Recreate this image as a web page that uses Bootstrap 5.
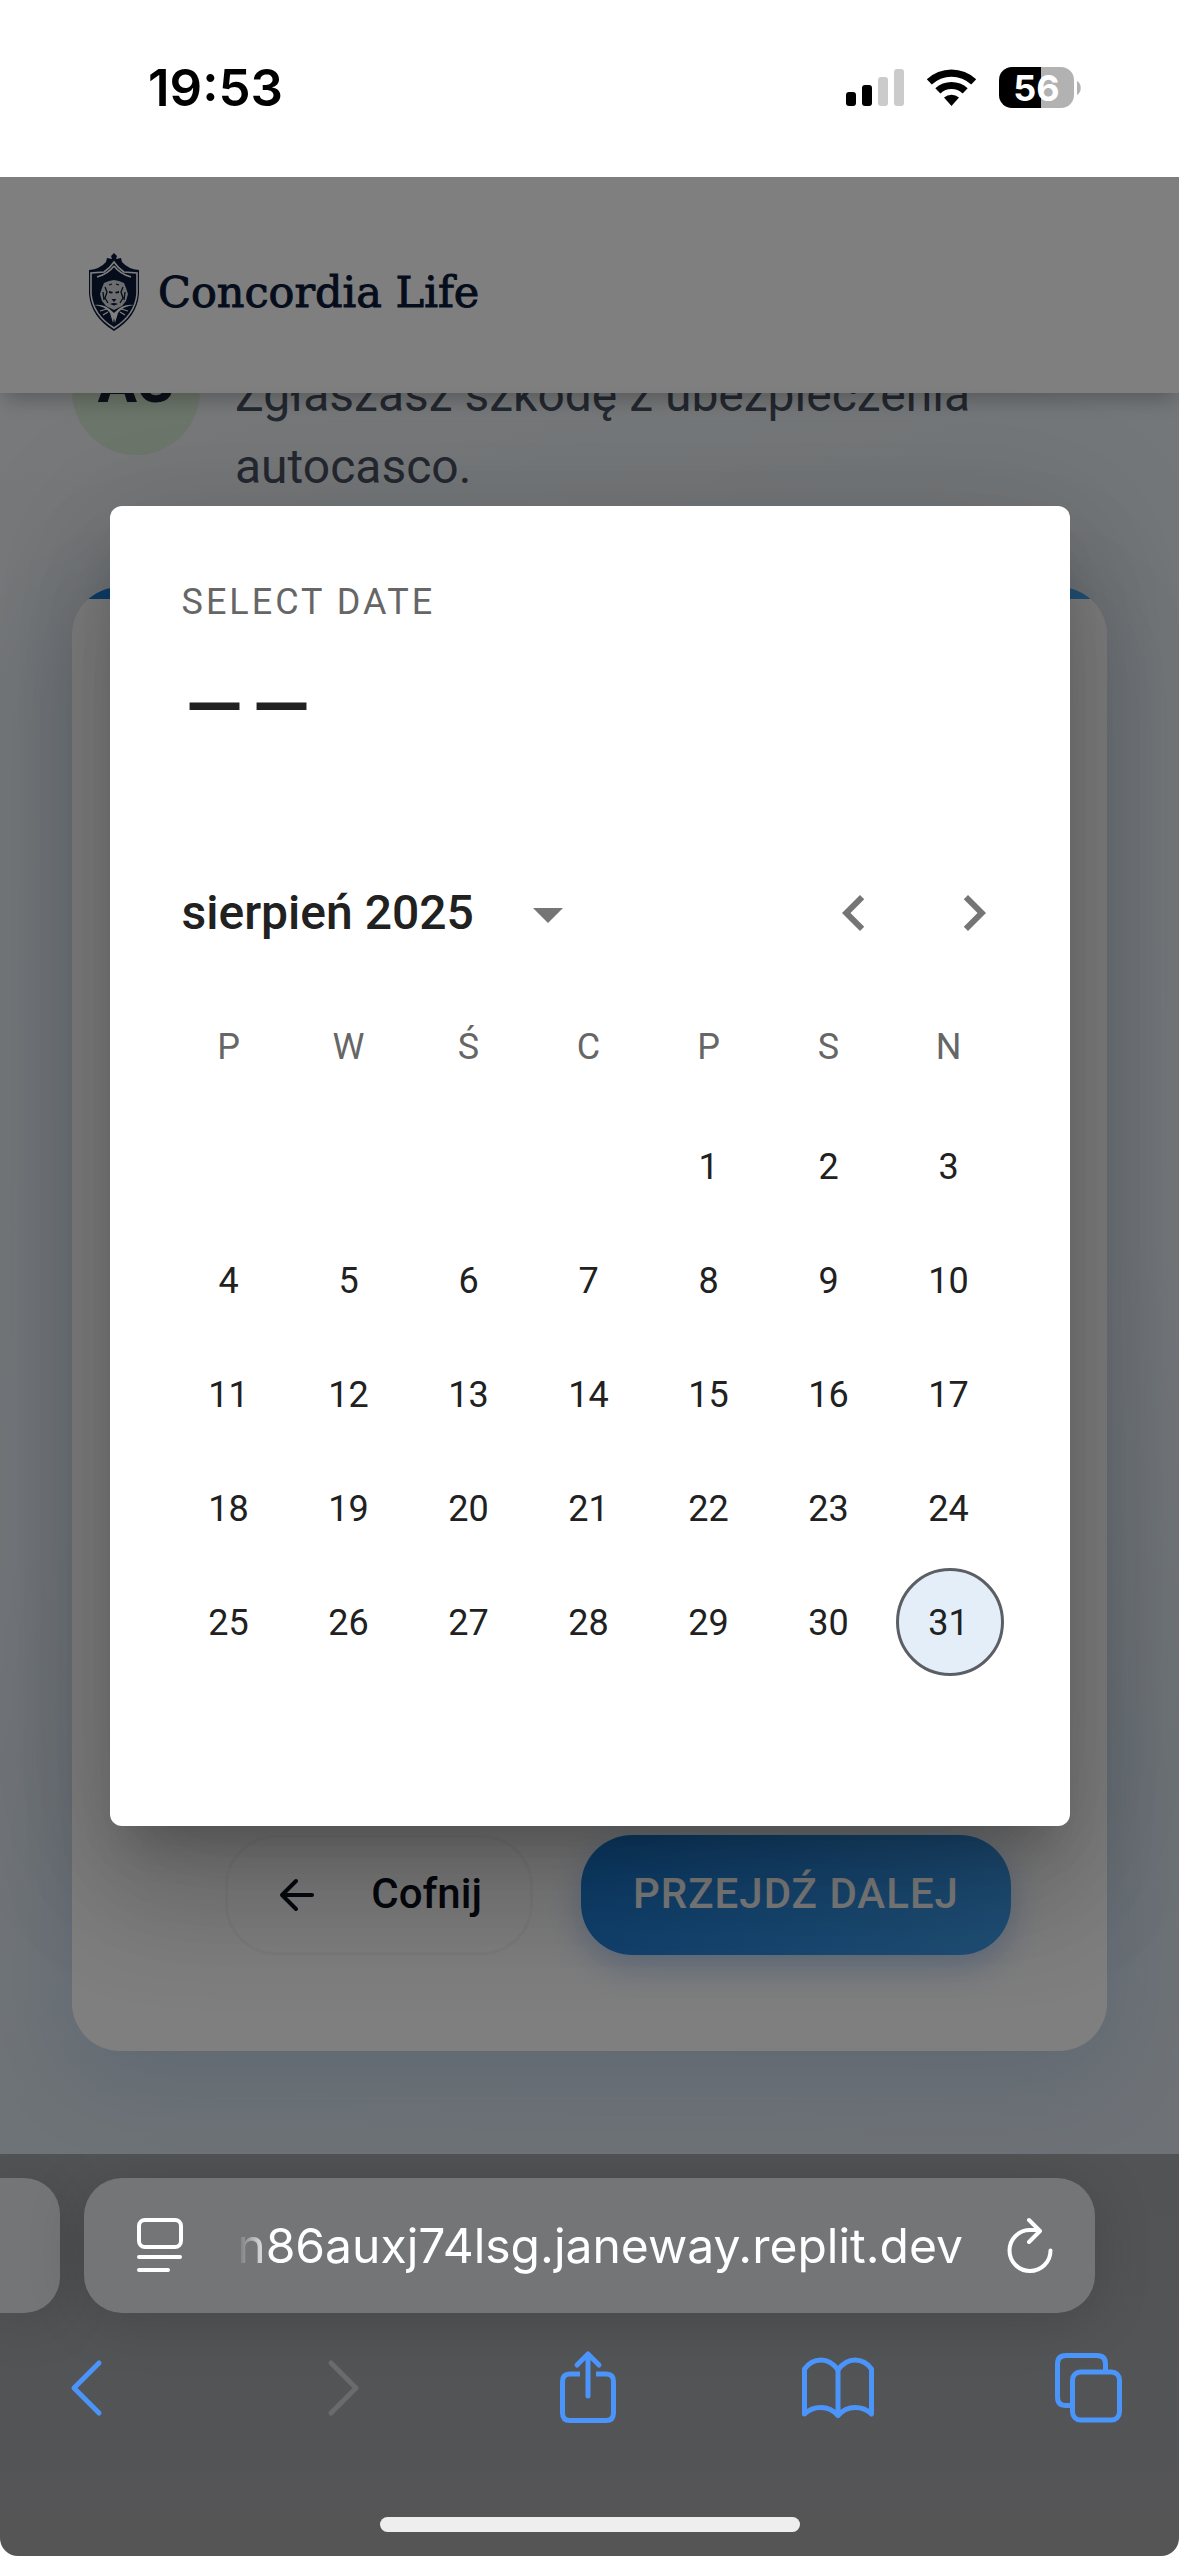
<!DOCTYPE html>
<html lang="pl">
<head>
<meta charset="utf-8">
<meta name="viewport" content="width=device-width, initial-scale=1">
<title>Concordia Life</title>
<link rel="stylesheet" href="https://cdn.jsdelivr.net/npm/bootstrap@5.3.0/dist/css/bootstrap.min.css">
<style>
  body { font-family: Roboto, "Liberation Sans", sans-serif; background: #fff; color: #212121; }
  svg { display: block; }
  button, input { font-family: inherit; }

  /* phone status bar */
  .status-bar { height: 177px; padding: 0 98px 0 148px; color: #000; font-family: Inter, "Liberation Sans", sans-serif; }
  .status-time { font-size: 51px; line-height: 60px; font-weight: 600; padding-top: 58px; }
  .status-icons { gap: 22px; padding-top: 67px; }
  .battery-level { width: 75px; height: 41px; border-radius: 13px; font-size: 36px; font-weight: 700; background: linear-gradient(90deg, #000 56%, #b2b2b2 56%); color: #fff; }

  /* page behind the dialog */
  .viewport { background: linear-gradient(165deg, #f4f6fa 0%, #e8eef2 25%, #e8eef4 60%, #dce6ee 85%, #dce4ee 100%); }
  .site-header { height: 216px; padding: 14px 87px 0; background: #fff; z-index: 1; box-shadow: 0 12px 18px -6px rgba(0,0,0,.2), 0 3px 30px rgba(0,0,0,.08); }
  .site-brand { gap: 17px; color: #0b1a38; text-decoration: none; font-family: "DejaVu Serif", serif; font-size: 43px; line-height: 56px; -webkit-text-stroke: 1px #0b1a38; }
  .intro { padding: 0 72px; gap: 35px; margin-top: -66px; }
  .intro-avatar { width: 128px; height: 128px; border-radius: 50%; background: #d9ecd6; color: #1a2233; font-size: 58px; font-weight: 800; line-height: 110px; }
  .intro-text { padding-top: 32px; font-size: 48px; line-height: 72px; color: #4a5161; }
  .form-card { margin: 84px 72px 103px; border-radius: 48px; background: #fff; box-shadow: 0 24px 96px rgba(20,90,170,.16); }
  .card-strip { height: 12px; background: linear-gradient(90deg, #1a7cd8, #48a5f0); }
  .card-actions { padding: 96px; gap: 48px; }
  .action { height: 120px; border-radius: 51px; font-size: 42px; font-weight: 500; }
  .action span { padding-bottom: 3px; display: block; }
  .action-back { padding: 0 48px 0 49px; gap: 54px; background: #fff; border: 3px solid #f4f6fb; color: #0c111c; }
  .action-next { min-width: 430px; border: 0; color: #fff; letter-spacing: 1px; background: linear-gradient(135deg, #1a7cd8, #42a0ee); box-shadow: 0 12px 36px rgba(30,110,220,.3); }
  .scrim { background: rgba(0,0,0,.5); z-index: 2; }

  /* date picker */
  .picker { width: 960px; max-width: 100%; padding: 48px 60px 147px; border-radius: 12px; background: #fff; box-shadow: 0 33px 45px -21px rgba(0,0,0,.2), 0 72px 114px 9px rgba(0,0,0,.14), 0 27px 138px 24px rgba(0,0,0,.12); }
  .picker-toolbar { padding: 0 12px; min-height: 298px; }
  .picker-label { font-size: 36px; line-height: 96px; letter-spacing: 3px; color: #666; }
  .picker-value { font-size: 102px; line-height: 114px; font-weight: 400; }
  .picker-nav { height: 122px; margin: 0 -24px 13px 0; padding: 0 0 0 12px; }
  .month-switch { gap: 51px; border: 0; background: none; padding: 0; font-size: 48px; font-weight: 500; color: #212121; }
  .step { width: 120px; height: 120px; border: 0; background: none; padding: 0; }
  .days { table-layout: fixed; width: 100%; border-collapse: collapse; font-size: 36px; text-align: center; }
  .days th { height: 122px; padding: 0 2px 2px 0; font-weight: 400; color: #666; }
  .days td { height: 114px; padding: 0; }
  .day { width: 108px; height: 108px; border: 0; border-radius: 50%; background: none; padding: 2px 2px 0 0; color: #212121; }
  .day-today { border: 3px solid #5b5f64; background: #e3eef9; }

  /* browser chrome */
  .browser { background: #fff; }
  .browser-bar { background: linear-gradient(180deg, #525355 0, #535456 50%, #555556 100%); border-radius: 0 0 18px 18px; padding-top: 24px; }
  .tab-strip { gap: 24px; padding-right: 84px; }
  .tab-box { height: 135px; background: #747577; box-shadow: 0 6px 60px rgba(0,0,0,.16); }
  .tab-prev { width: 60px; border-radius: 0 36px 36px 0; }
  .tab-current { border-radius: 38px; padding: 0 42px 0 53px; }
  .url-text { width: 0; min-width: 0; border: 0; background: none; padding: 0; margin: 0 44px 0 54px; color: #fff; font-family: Inter, "Liberation Sans", sans-serif; font-size: 48px; text-align: right;
    -webkit-mask-image: linear-gradient(90deg, transparent 0, #000 34px); mask-image: linear-gradient(90deg, transparent 0, #000 34px); }
  .plain-btn { border: 0; background: none; padding: 0; }
  .browser-tools { padding: 32px 54px 0 50px; height: 152px; }
  .browser-tools .plain-btn { width: 74px; }
  .browser-tools svg { margin: 0 auto; }
  .home-pill { width: 420px; height: 15px; border-radius: 8px; background: #eee; margin: 52px auto 24px; }
</style>
<script src="https://cdn.jsdelivr.net/npm/bootstrap@5.3.0/dist/js/bootstrap.bundle.min.js"></script>
</head>
<body class="d-flex flex-column min-vh-100">

<div class="status-bar d-flex justify-content-between align-items-start">
  <div class="status-time">19:53</div>
  <div class="status-icons d-flex align-items-start">
    <svg width="58" height="41" viewBox="0 0 58 41"><g fill="#000"><rect x="0" y="25" width="10" height="14" rx="3"/><rect x="16" y="18" width="10" height="21" rx="3"/></g><g fill="#cbcbcb"><rect x="32" y="10" width="10" height="29" rx="3"/><rect x="48" y="2" width="10" height="37" rx="3"/></g></svg>
    <svg width="51" height="41" viewBox="0 0 51 41"><path d="M0.800 12.200A36 36 0 0 1 50.200 12.200L45.200 17.600A28.500 28.500 0 0 0 5.800 17.600Z"/><path d="M9.300 21.200A24 24 0 0 1 41.700 21.200L36.600 26.400A16.500 16.500 0 0 0 14.400 26.400Z"/><path d="M18 30.500A12 12 0 0 1 33 30.500L25.500 39Z"/></svg>
    <div class="d-flex align-items-center">
      <div class="battery-level d-flex align-items-center justify-content-center">56</div>
      <svg width="7" height="14" viewBox="0 0 7 14"><path d="M3 0C8 2.500 8 11.500 3 14Z" fill="#b2b2b2"/></svg>
    </div>
  </div>
</div>

<main class="viewport position-relative flex-grow-1 d-flex flex-column overflow-hidden">
  <header class="site-header position-relative d-flex align-items-center">
    <a class="site-brand d-flex align-items-center" href="#">
      <svg width="54" height="80" viewBox="0 0 54 80">
        <path d="M27 1L30 4L29 7L34 6L35 10Q41 17 52 18V42Q50 65 27 79Q4 65 2 42V18Q13 17 19 10L20 6L25 7L24 4Z" fill="#0b1a38"/>
        <path d="M27 10Q31 16 37 20L50 21V42Q48 63 27 76Q6 63 4 42V21L17 20Q23 16 27 10Z" fill="none" stroke="#fff" stroke-width="1.600"/>
        <path d="M27 14Q21 22 10 25M27 14Q33 22 44 25" fill="none" stroke="#fff" stroke-width="1.500"/>
        <path d="M27 28L32 29L37 31L39 36L41 42L39 49L35 54L31 56L27 58L23 56L19 54L15 49L13 42L15 36L17 31L22 29Z" fill="#d8dade"/>
        <path d="M18 35L20 40L18 46L21 51M36 35L34 40L36 46L33 51M16 40L17 48M38 40L37 48M22 33L25 32M32 33L29 32" fill="none" stroke="#0b1a38" stroke-width="1.300"/>
        <path d="M22 39L26 40L25 41.500L22 41ZM32 39L28 40L29 41.500L32 41ZM24.500 47H29.500L27 50ZM23 52Q27 50 31 52L27 53.500Z" fill="#0b1a38"/>
        <path d="M7 53Q18 51 27 61Q36 51 47 53Q36 54 31 61L28 71L27 66L26 71L23 61Q18 54 7 53Z" fill="#fff"/>
        <path d="M13 59L20 57M16 63L21 60M41 59L34 57M38 63L33 60" stroke="#fff" stroke-width="1.200"/>
      </svg>
      <span>Concordia Life</span>
    </a>
  </header>

  <section class="intro d-flex align-items-start">
    <div class="intro-avatar flex-shrink-0 d-flex justify-content-center">AC</div>
    <p class="intro-text mb-0">Zgłaszasz szkodę z ubezpieczenia autocasco.</p>
  </section>

  <form class="form-card flex-grow-1 d-flex flex-column justify-content-between overflow-hidden">
    <div class="card-strip"></div>
    <div class="card-actions d-flex justify-content-end">
      <button type="button" class="action action-back d-flex align-items-center">
        <svg width="40" height="40" viewBox="0 0 40 40" fill="none" stroke="currentColor" stroke-width="4" stroke-linecap="round" stroke-linejoin="round"><path d="M35 20H5M19 6L5 20L19 34"/></svg>
        <span>Cofnij</span>
      </button>
      <button type="button" class="action action-next"><span>PRZEJDŹ DALEJ</span></button>
    </div>
  </form>

  <div class="scrim position-absolute top-0 start-0 w-100 h-100 d-flex align-items-center justify-content-center">
    <div class="picker" role="dialog" aria-labelledby="picker-label">
      <div class="picker-toolbar">
        <div class="picker-label" id="picker-label">SELECT DATE</div>
        <div class="picker-value">––</div>
      </div>
      <div class="picker-nav d-flex align-items-center">
        <button type="button" class="month-switch d-flex align-items-center">
          <span>sierpień 2025</span>
          <svg width="46" height="24" viewBox="0 0 46 24"><path d="M8 7H38L23 22Z" fill="#757575"/></svg>
        </button>
        <div class="d-flex ms-auto">
          <button type="button" class="step" aria-label="Poprzedni miesiąc"><svg class="mx-auto" width="72" height="72" viewBox="0 0 24 24" fill="#757575"><path d="M15.410 7.410 14 6l-6 6 6 6 1.410-1.410L10.830 12z"/></svg></button>
          <button type="button" class="step" aria-label="Następny miesiąc"><svg class="mx-auto" width="72" height="72" viewBox="0 0 24 24" fill="#757575"><path d="M10 6 8.590 7.410 13.170 12l-4.580 4.590L10 18l6-6z"/></svg></button>
        </div>
      </div>
      <table class="days">
        <thead><tr><th>P</th><th>W</th><th>Ś</th><th>C</th><th>P</th><th>S</th><th>N</th></tr></thead>
        <tbody>
          <tr><td></td><td></td><td></td><td></td><td><button class="day">1</button></td><td><button class="day">2</button></td><td><button class="day">3</button></td></tr>
          <tr><td><button class="day">4</button></td><td><button class="day">5</button></td><td><button class="day">6</button></td><td><button class="day">7</button></td><td><button class="day">8</button></td><td><button class="day">9</button></td><td><button class="day">10</button></td></tr>
          <tr><td><button class="day">11</button></td><td><button class="day">12</button></td><td><button class="day">13</button></td><td><button class="day">14</button></td><td><button class="day">15</button></td><td><button class="day">16</button></td><td><button class="day">17</button></td></tr>
          <tr><td><button class="day">18</button></td><td><button class="day">19</button></td><td><button class="day">20</button></td><td><button class="day">21</button></td><td><button class="day">22</button></td><td><button class="day">23</button></td><td><button class="day">24</button></td></tr>
          <tr><td><button class="day">25</button></td><td><button class="day">26</button></td><td><button class="day">27</button></td><td><button class="day">28</button></td><td><button class="day">29</button></td><td><button class="day">30</button></td><td><button class="day day-today">31</button></td></tr>
        </tbody>
      </table>
    </div>
  </div>
</main>

<footer class="browser">
  <div class="browser-bar d-flex flex-column">
    <div class="tab-strip d-flex">
      <div class="tab-box tab-prev flex-shrink-0"></div>
      <div class="tab-box tab-current flex-grow-1 d-flex align-items-center">
        <button type="button" class="plain-btn" aria-label="Menu strony"><svg width="46" height="56" viewBox="0 0 46 56" fill="none" stroke="#fff" stroke-width="4" stroke-linecap="round"><rect x="2" y="2" width="42" height="27" rx="6"/><path d="M2 39H43M2 52H31"/></svg></button>
        <input class="url-text flex-grow-1" type="text" aria-label="Adres" value="n86auxj74lsg.janeway.replit.dev">
        <button type="button" class="plain-btn" aria-label="Odśwież"><svg width="46" height="58" viewBox="0 0 46 58" fill="none" stroke="#fff" stroke-width="4" stroke-linecap="round" stroke-linejoin="round"><path d="M43.500 33.500A20.500 20.500 0 1 1 23 13H32M22 3L33 14L22 25"/></svg></button>
      </div>
    </div>
    <nav class="browser-tools d-flex justify-content-between align-items-start">
      <button type="button" class="plain-btn" aria-label="Wstecz"><svg width="36" height="84" viewBox="0 0 36 84" fill="none" stroke="#4a94fa" stroke-width="5" stroke-linecap="round" stroke-linejoin="round"><path d="M30 18L5 43L30 68"/></svg></button>
      <button type="button" class="plain-btn" aria-label="Dalej"><svg width="48" height="84" viewBox="0 0 48 84" fill="none" stroke="#6b6b6c" stroke-width="5" stroke-linecap="round" stroke-linejoin="round"><path d="M18 18L43 43L18 68"/></svg></button>
      <button type="button" class="plain-btn" aria-label="Udostępnij"><svg width="60" height="84" viewBox="0 0 60 84" fill="none" stroke="#4a94fa" stroke-width="5" stroke-linecap="round" stroke-linejoin="round"><path stroke-linecap="butt" d="M22 29H12Q4.500 29 4.500 36.500V68Q4.500 75.500 12 75.500H48Q55.500 75.500 55.500 68V36.500Q55.500 29 48 29H38"/><path d="M30 51V9M19 20L30 9L41 20"/></svg></button>
      <button type="button" class="plain-btn" aria-label="Zakładki"><svg width="74" height="84" viewBox="0 0 74 84" fill="none" stroke="#4a94fa" stroke-width="5" stroke-linecap="round" stroke-linejoin="round"><path d="M37 25Q30 15 20 15Q10 15 3.500 24V69Q10 62.500 20 62.500Q30 62.500 37 70.500Q44 62.500 54 62.500Q64 62.500 70.500 69V24Q64 15 54 15Q44 15 37 25V70"/></svg></button>
      <button type="button" class="plain-btn" aria-label="Karty"><svg width="69" height="84" viewBox="0 0 69 84" fill="none" stroke="#4a94fa" stroke-width="5"><path d="M17 60.500H12Q3.500 60.500 3.500 52V19Q3.500 10.500 12 10.500H43Q51.500 10.500 51.500 19V26"/><rect x="18.500" y="27" width="47" height="48" rx="8"/></svg></button>
    </nav>
    <div class="home-pill"></div>
  </div>
</footer>

</body>
</html>
